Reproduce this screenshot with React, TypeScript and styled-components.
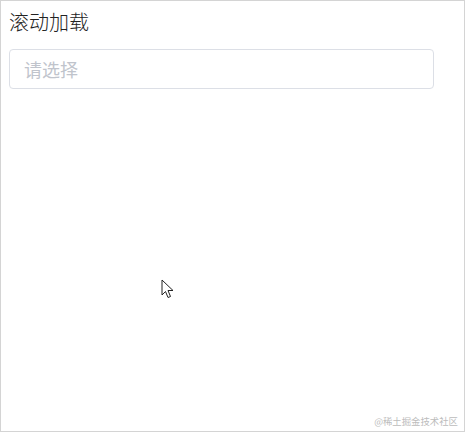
import styled, { createGlobalStyle } from "styled-components";

const GlobalStyle = createGlobalStyle`
  html, body {
    margin: 0;
    padding: 0;
    background: #ffffff;
  }
  * {
    box-sizing: border-box;
  }
`;

const Frame = styled.div`
  position: relative;
  width: 465px;
  height: 432px;
  border: 1px solid #d4d4d4;
  background: #ffffff;
  padding: 9px 30px 0 8px;
  font-family: "Noto Sans CJK SC", "Noto Sans", sans-serif;
`;

const Title = styled.div`
  font-size: 20px;
  font-weight: 300;
  line-height: 24px;
  color: #222222;
  margin-bottom: 15px;
`;

const SelectBox = styled.div`
  height: 40px;
  border: 1px solid #dcdfe6;
  border-radius: 4px;
  display: flex;
  align-items: center;
  padding: 0 14px;
`;

const Placeholder = styled.span`
  font-size: 18px;
  color: #c0c4cc;
`;

const Cursor = styled.svg`
  position: absolute;
  left: 160px;
  top: 278px;
`;

const Watermark = styled.div`
  position: absolute;
  right: 6px;
  bottom: 3px;
  font-size: 9.4px;
  color: #bcbcbc;
  font-family: "Noto Sans CJK SC", serif;
`;

export default function App() {
  return (
    <>
      <GlobalStyle />
      <Frame>
        <Title>滚动加载</Title>
        <SelectBox>
          <Placeholder>请选择</Placeholder>
        </SelectBox>
        <Cursor width="16" height="22" viewBox="0 0 16 22">
          <path
            d="M1 1 L1 16 L4.5 12.5 L7 18.5 L9.5 17.5 L7 11.5 L12 11.5 Z"
            fill="#ffffff"
            stroke="#222222"
            strokeWidth="1"
            strokeLinejoin="round"
          />
        </Cursor>
        <Watermark>@稀土掘金技术社区</Watermark>
      </Frame>
    </>
  );
}
